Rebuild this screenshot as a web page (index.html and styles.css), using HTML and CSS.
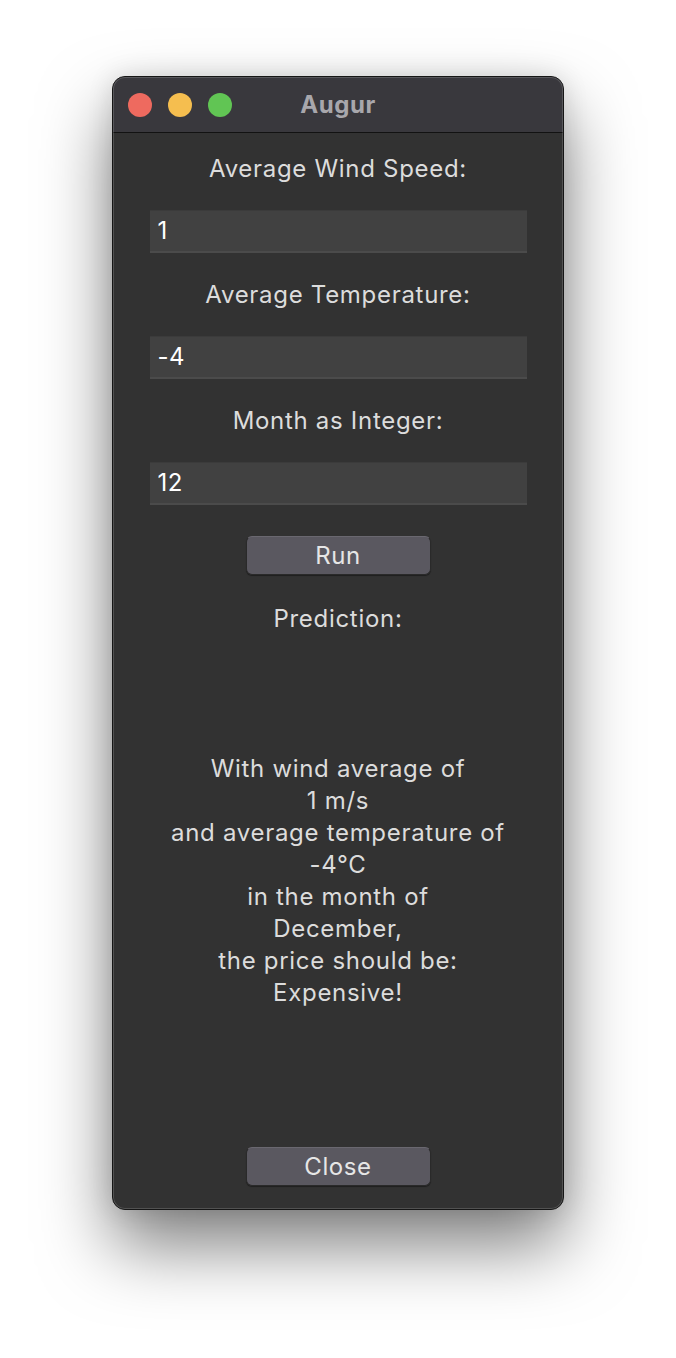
FILE: index.html
```html
<!DOCTYPE html>
<html lang="en">
<head>
<meta charset="utf-8">
<title>Augur</title>
<link rel="stylesheet" href="styles.css">
</head>
<body>
<div class="window">
  <div class="titlebar">
    <div class="lights">
      <span class="light red"></span>
      <span class="light yellow"></span>
      <span class="light green"></span>
    </div>
    <div class="title">Augur</div>
  </div>
  <div class="content">
    <div class="label">Average Wind Speed:</div>
    <div class="field">1</div>
    <div class="label">Average Temperature:</div>
    <div class="field">-4</div>
    <div class="label">Month as Integer:</div>
    <div class="field">12</div>
    <button class="btn run">Run</button>
    <div class="label prediction">Prediction:</div>
    <div class="result">With wind average of<br>1 m/s<br>and average temperature of<br>-4°C<br>in the month of<br>December,<br>the price should be:<br>Expensive!</div>
    <button class="btn close">Close</button>
  </div>
</div>
</body>
</html>
```
FILE: styles.css
```css
html, body {
  margin: 0;
  padding: 0;
  background: #ffffff;
}
body {
  box-sizing: border-box;
  min-height: 1358px;
  padding-top: 76px;
  font-family: Inter, "Noto Sans", "Liberation Sans", sans-serif;
}
.window {
  position: relative;
  width: 450px;
  height: 1132px;
  margin: 0 auto;
  border: 1px solid #161616;
  border-radius: 13px;
  background: #323232;
  overflow: hidden;
  box-shadow: 0 36px 70px rgba(0,0,0,0.5), 0 0 26px rgba(0,0,0,0.12);
  display: flex;
  flex-direction: column;
}
.window::after {
  content: "";
  position: absolute;
  inset: 0;
  border-radius: 12px;
  box-shadow: inset 0 0 0 1px rgba(255,255,255,0.16);
  pointer-events: none;
}
.titlebar {
  height: 55px;
  background: #39383d;
  border-bottom: 1px solid #121212;
  display: flex;
  align-items: center;
  position: relative;
}
.lights {
  display: flex;
  gap: 16px;
  padding-left: 15px;
}
.light {
  width: 24px;
  height: 24px;
  border-radius: 50%;
  display: block;
}
.red { background: #ee6a5f; }
.yellow { background: #f5be4f; }
.green { background: #61c554; }
.title {
  position: absolute;
  left: 0;
  right: 0;
  text-align: center;
  color: #a8a7ac;
  font-weight: 700;
  font-size: 24px;
  letter-spacing: 0.6px;
}
.content {
  flex: 1;
  display: flex;
  flex-direction: column;
  align-items: center;
  padding-top: 20px;
}
.label {
  color: #dcdcdc;
  font-size: 24px;
  letter-spacing: 0.7px;
  line-height: 32px;
  height: 32px;
}
.field {
  box-sizing: border-box;
  width: 377px;
  height: 43px;
  margin-top: 25px;
  margin-bottom: 26px;
  background: #414141;
  border-top: 1px solid #3b3b3b;
  border-bottom: 2px solid #4b4b4b;
  color: #ffffff;
  font-size: 24px;
  letter-spacing: 0.5px;
  line-height: 40px;
  padding-left: 8px;
}
.btn {
  box-sizing: border-box;
  width: 185px;
  height: 39px;
  background: #5a5860;
  border: 1px solid #2a2a2a;
  border-top-color: #6a6870;
  border-radius: 6px;
  color: #e6e6e6;
  font-family: inherit;
  font-size: 24px;
  letter-spacing: 0.6px;
  line-height: 36px;
  padding: 0;
  box-shadow: 0 1px 1px rgba(0,0,0,0.4);
}
.run {
  margin-top: 5px;
}
.prediction {
  margin-top: 28px;
}
.result {
  margin-top: 118px;
  color: #dcdcdc;
  font-size: 24px;
  letter-spacing: 0.7px;
  line-height: 32px;
  text-align: center;
}
.close {
  margin-top: 138px;
}
```
